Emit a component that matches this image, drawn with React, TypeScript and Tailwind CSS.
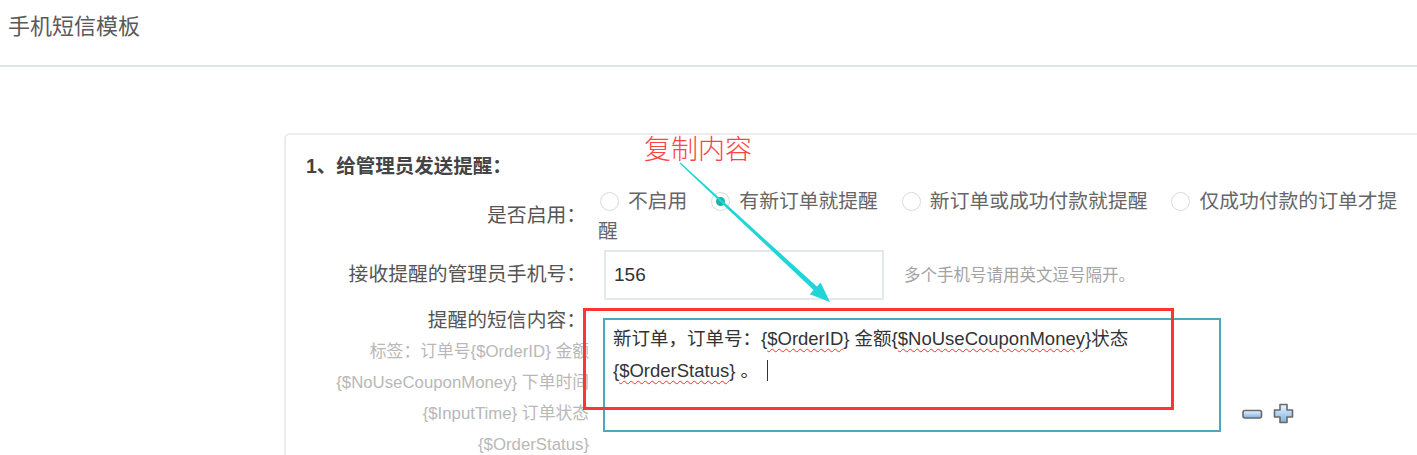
const font = "font-['Liberation_Sans','Noto_Sans_CJK_SC',sans-serif]";

function Radio({ label, checked }: { label: string; checked?: boolean }) {
  return (
    <>
      <span className="inline-flex items-center justify-center align-middle w-[19px] h-[19px] rounded-full border-[1.5px] border-[#d8dbde] ml-0.5 mr-[9px] -mt-[3px]">
        {checked && <span className="w-[9px] h-[9px] rounded-full bg-[#1db3a2]" />}
      </span>
      <span className="mr-[22px]">{label}</span>
    </>
  );
}

function MinusIcon() {
  return (
    <svg width="21" height="11" viewBox="0 0 21 11">
      <defs>
        <linearGradient id="mg" x1="0" y1="0" x2="0" y2="1">
          <stop offset="0" stopColor="#eef6ff" />
          <stop offset="1" stopColor="#7eb0e3" />
        </linearGradient>
      </defs>
      <rect x="1" y="1.5" width="18.5" height="7.5" rx="2" fill="url(#mg)" stroke="#6a6a6a" strokeWidth="1.6" />
    </svg>
  );
}

function PlusIcon() {
  return (
    <svg width="22" height="22" viewBox="0 0 22 22">
      <defs>
        <linearGradient id="pg" x1="0" y1="0" x2="0" y2="1">
          <stop offset="0" stopColor="#eef6ff" />
          <stop offset="1" stopColor="#7eb0e3" />
        </linearGradient>
      </defs>
      <path
        d="M7 1.5h7v5.5h5.5v7H14v5.5H7V14H1.5V7H7z"
        fill="url(#pg)"
        stroke="#6a6a6a"
        strokeWidth="1.6"
        strokeLinejoin="round"
      />
    </svg>
  );
}

function Squiggle({ children }: { children: React.ReactNode }) {
  return (
    <span className="underline decoration-wavy decoration-[#ee3333] decoration-1 underline-offset-[3px]">
      {children}
    </span>
  );
}

export default function App() {
  return (
    <div className={`relative w-screen h-[455px] overflow-hidden bg-white ${font}`}>
      <div className="h-[67px] border-b-2 border-[#e2e6ea] pl-2 pt-[12px]">
        <h1 className="text-[22px] leading-[30px] text-[#5a5a5a]">手机短信模板</h1>
      </div>

      <div className="ml-[284px] mt-[66px] w-[1200px] border-l-2 border-t-2 border-[#eaecee] rounded-tl-[6px]">
        <div className="pl-5 pt-[16px] text-[19.5px] leading-[30px] font-bold text-[#444]">
          1、给管理员发送提醒：
        </div>

        {/* 是否启用 */}
        <div className="flex items-center mt-[5px]">
          <div className="w-[300px] text-right text-[19.8px] text-[#555]">是否启用：</div>
          <div className="w-[812px] ml-3 text-[19.8px] leading-[30px] text-[#666]">
            <Radio label="不启用" />
            <Radio label="有新订单就提醒" checked />
            <Radio label="新订单或成功付款就提醒" />
            <Radio label="仅成功付款的订单才提醒" />
          </div>
        </div>

        {/* 手机号 */}
        <div className="flex items-center mt-[4px]">
          <div className="w-[300px] text-right text-[19.8px] text-[#555]">接收提醒的管理员手机号：</div>
          <div className="ml-3 flex items-center">
            <div className="ml-1.5 w-[280px] h-[50px] border-2 border-[#e3e8ec] flex items-center pl-[8px] text-[19px] text-[#333]">
              156
            </div>
            <span className="ml-5 text-[16.5px] text-[#a3a3a3]">多个手机号请用英文逗号隔开。</span>
          </div>
        </div>

        {/* 短信内容 */}
        <div className="flex items-start mt-[4px]">
          <div className="w-[300px] text-right">
            <div className="text-[19.8px] leading-[32px] text-[#555]">提醒的短信内容：</div>
            <div className="text-[16.8px] leading-[31px] text-[#b8b8b8] -mr-[3px]">
              标签：订单号{"{$OrderID}"} 金额
              <br />
              {"{$NoUseCouponMoney}"} 下单时间
              <br />
              {"{$InputTime}"} 订单状态
              <br />
              {"{$OrderStatus}"}
            </div>
          </div>
          <div className="ml-3 mt-[14px] flex items-end">
            <div className="ml-[5px] w-[618px] h-[114px] border-2 border-[#4aaabb] pl-2 pt-[3px] text-[18.5px] leading-[32px] text-[#333]">
              新订单，订单号：{"{"}<Squiggle>$OrderID</Squiggle>{"}"} 金额{"{"}
              <Squiggle>$NoUseCouponMoney</Squiggle>
              {"}"}状态
              <br />
              {"{"}<Squiggle>$OrderStatus</Squiggle>
              {"}"} 。
              <span className="inline-block w-px h-[21px] bg-[#333] align-middle ml-2 -mt-1" />
            </div>
            <div className="flex items-center gap-[10px] ml-[21px] mb-[7px]">
              <MinusIcon />
              <PlusIcon />
            </div>
          </div>
        </div>
      </div>

      {/* annotation overlay */}
      <div className="absolute left-[583px] top-[308px] w-[591px] h-[102px] border-[3px] border-[#ff3535] pointer-events-none" />
      <div className="absolute left-[644px] top-[133px] text-[27px] leading-[34px] font-light text-[#ff4444] pointer-events-none">
        复制内容
      </div>
      <svg className="absolute left-0 top-0 pointer-events-none" width="1417" height="455">
        <polygon
          points="680.4,162.6 816.9,286.5 820.6,282.4 830,302 809.8,294.2 813.5,290.1 679.6,163.4"
          fill="#1fd5d8"
        />
      </svg>
    </div>
  );
}
